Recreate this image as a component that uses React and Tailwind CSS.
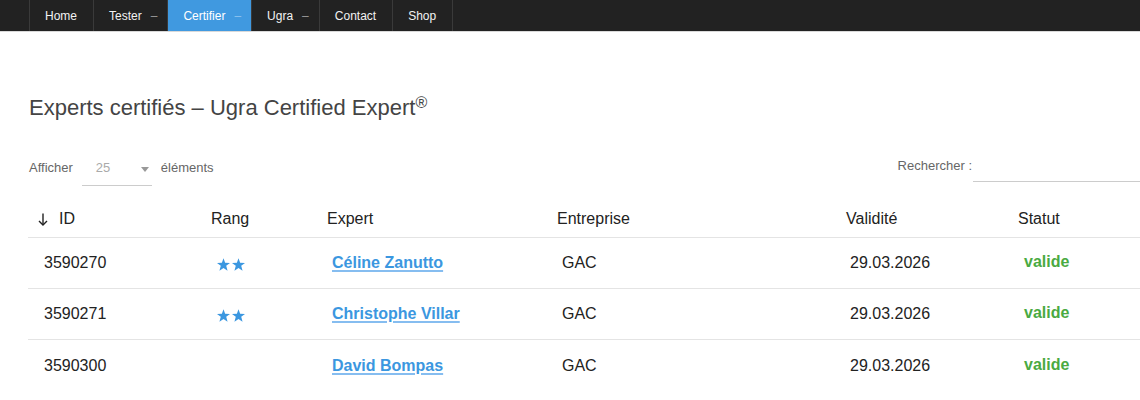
import React from "react";

const navItems = [
  { label: "Home" },
  { label: "Tester", sub: true },
  { label: "Certifier", sub: true, active: true },
  { label: "Ugra", sub: true },
  { label: "Contact" },
  { label: "Shop" },
];

const experts = [
  { id: "3590270", stars: 2, name: "Céline Zanutto", company: "GAC", date: "29.03.2026" },
  { id: "3590271", stars: 2, name: "Christophe Villar", company: "GAC", date: "29.03.2026" },
  { id: "3590300", stars: 0, name: "David Bompas", company: "GAC", date: "29.03.2026" },
];

const Star = () => (
  <svg width="13" height="13" viewBox="0 0 24 23" className="fill-[#3b97e0]">
    <polygon points="12,0 15,8.3 24,8.6 17,14 19.5,23 12,17.8 4.5,23 7,14 0,8.6 9,8.3" />
  </svg>
);

const NavItem = ({ label, sub, active }) => {
  return (
    <div
      className={`flex items-center h-full border-l border-[#3a3a3a] text-[12px] ${
        sub ? "pl-[15px] pr-[10px]" : "pl-[15px] pr-4"
      } ${active ? "bg-[#4099e0] text-white" : "text-[#f2f2f2]"}`}
    >
      <span>{label}</span>
      {sub && (
        <span className={`ml-[9px] mt-[1px] ${active ? "text-[#8cc2ef]" : "text-[#9a9a9a]"}`}>–</span>
      )}
    </div>
  );
};

export default function App() {
  const cols = "grid grid-cols-[173px_116px_230px_289px_172px_1fr]";
  return (
    <div className="min-h-screen bg-white overflow-hidden font-['Liberation_Sans',Arial,sans-serif]">
      {/* top navigation */}
      <nav className="h-[32px] bg-[#222] border-b border-[#d9d9d9] flex pl-[29px]">
        {navItems.map((item) => (
          <NavItem key={item.label} {...item} />
        ))}
        <div className="h-full border-l border-[#3a3a3a]" />
      </nav>

      <div className="pl-[29px]">
        <h1 className="mt-[63px] text-[22px] leading-[26px] text-[#444]">
          Experts certifiés – Ugra Certified Expert<sup className="text-[16px] top-[-0.45em]">®</sup>
        </h1>

        {/* controls */}
        <div className="mt-[29px] flex justify-between">
          <div className="flex items-center h-[36px] text-[13px] text-[#666]">
            <span>Afficher</span>
            <div className="ml-[9px] w-[70px] h-full flex items-center justify-between pl-[14px] pr-[3px] border-b border-[#ccc]">
              <span className="text-[#aaa]">25</span>
              <span className="w-0 h-0 border-l-[4px] border-r-[4px] border-t-[5px] border-l-transparent border-r-transparent border-t-[#999] mt-[3px]" />
            </div>
            <span className="ml-[9px]">éléments</span>
          </div>
          <div className="flex items-center h-[32px] text-[13px] text-[#666] self-start">
            <span>Rechercher :</span>
            <div className="ml-[1px] w-[167px] h-full border-b border-[#ccc]" />
          </div>
        </div>

        {/* table */}
        <div className="mt-[15px] -ml-[1px] text-[16px] text-[#222]">
          <div className={`${cols} h-[37px] items-center border-b border-[#e4e4e4]`}>
            <div className="pl-[10px] flex items-center">
              <svg width="10" height="13" viewBox="0 0 10 13" fill="none" stroke="#222" strokeWidth="1.4">
                <line x1="5" y1="0.5" x2="5" y2="12" />
                <polyline points="1,8 5,12 9,8" />
              </svg>
              <span className="ml-[11px]">ID</span>
            </div>
            <div className="pl-[10px]">Rang</div>
            <div className="pl-[10px]">Expert</div>
            <div className="pl-[10px]">Entreprise</div>
            <div className="pl-[10px]">Validité</div>
            <div className="pl-[10px]">Statut</div>
          </div>

          {experts.map((e, idx) => (
            <div
              key={e.id}
              className={`${cols} h-[51px] items-center ${
                idx < experts.length - 1 ? "border-b border-[#e4e4e4]" : ""
              }`}
            >
              <div className="pl-[16px]">{e.id}</div>
              <div className="pl-[16px] flex gap-[2px] mt-[2px]">
                {Array.from({ length: e.stars }).map((_, i) => (
                  <Star key={i} />
                ))}
              </div>
              <div className="pl-[15px]">
                <a
                  href="#"
                  className="font-bold text-[#3b97e0] underline decoration-2 decoration-[#86bdf0] underline-offset-[2px]"
                >
                  {e.name}
                </a>
              </div>
              <div className="pl-[15px]">{e.company}</div>
              <div className="pl-[14px]">{e.date}</div>
              <div className="pl-[16px] font-bold text-[#4aaa42] -mt-[2px]">valide</div>
            </div>
          ))}
        </div>
      </div>
    </div>
  );
}
